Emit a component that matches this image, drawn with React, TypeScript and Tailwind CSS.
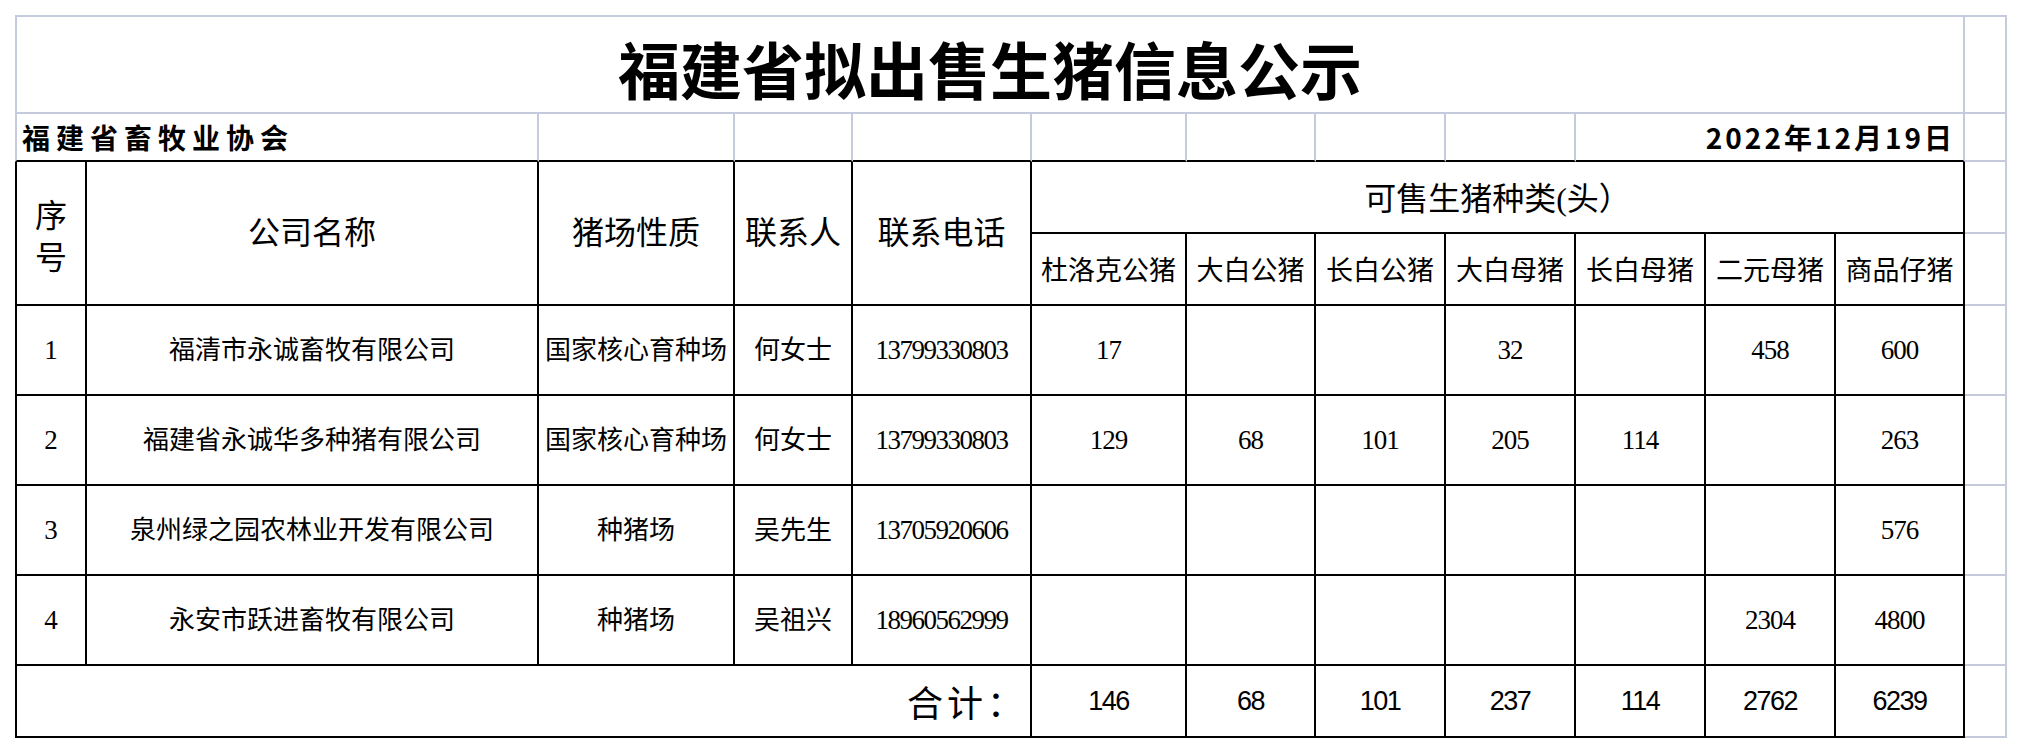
import React from "react";

const G = "border-[#c5cbdc]";
const serif = "font-['Liberation_Serif','Noto_Sans_CJK_SC',serif]";
const hei = "font-['Noto_Sans_CJK_SC',sans-serif]";
const arial = "font-['Liberation_Sans','Noto_Sans_CJK_SC',sans-serif]";

type Row = {
  no: string;
  name: string;
  kind: string;
  contact: string;
  phone: string;
  counts: string[];
};

const rows: Row[] = [
  { no: "1", name: "福清市永诚畜牧有限公司", kind: "国家核心育种场", contact: "何女士", phone: "13799330803", counts: ["17", "", "", "32", "", "458", "600"] },
  { no: "2", name: "福建省永诚华多种猪有限公司", kind: "国家核心育种场", contact: "何女士", phone: "13799330803", counts: ["129", "68", "101", "205", "114", "", "263"] },
  { no: "3", name: "泉州绿之园农林业开发有限公司", kind: "种猪场", contact: "吴先生", phone: "13705920606", counts: ["", "", "", "", "", "", "576"] },
  { no: "4", name: "永安市跃进畜牧有限公司", kind: "种猪场", contact: "吴祖兴", phone: "18960562999", counts: ["", "", "", "", "", "2304", "4800"] },
];

const kinds = ["杜洛克公猪", "大白公猪", "长白公猪", "大白母猪", "长白母猪", "二元母猪", "商品仔猪"];
const totals = ["146", "68", "101", "237", "114", "2762", "6239"];

const cell = "flex items-center justify-center border-r-2 border-b-2 border-black text-black";
const side = `border-r-2 border-b-2 ${G}`;

export default function App() {
  return (
    <div className="min-h-screen bg-white pt-[15px] pl-[15px]">
      <div className="grid grid-cols-[72px_452px_196px_118px_179px_155px_129px_130px_130px_130px_130px_129px_42px] grid-rows-[99px_48px_72px_72px_90px_90px_90px_90px_72px] w-max">
        {/* title row */}
        <div className={`col-span-12 flex items-center justify-center border-2 ${G} pt-2 text-[62px] font-bold text-black ${hei}`}>
          福建省拟出售生猪信息公示
        </div>
        <div className={`border-t-2 ${side}`} />

        {/* org / date row */}
        <div className={`col-span-2 flex items-center border-l-2 border-r-2 border-b-2 border-l-[#c5cbdc] border-r-[#c5cbdc] border-b-black pl-[5px] text-[28px] font-bold tracking-[6px] text-black ${hei}`}>
          福建省畜牧业协会
        </div>
        {[0, 1, 2, 3, 4, 5, 6].map((i) => (
          <div key={i} className="border-r-2 border-b-2 border-r-[#c5cbdc] border-b-black" />
        ))}
        <div className={`col-span-3 flex items-center justify-end border-r-2 border-b-2 border-r-[#c5cbdc] border-b-black pr-[8px] text-[28px] font-bold tracking-[3px] text-black ${hei}`}>
          2022年12月19日
        </div>
        <div className={side} />

        {/* header */}
        <div className={`${cell} row-span-2 border-l-2 flex-col text-[32px] leading-[42px] pt-2 ${serif}`}>
          <span>序</span>
          <span>号</span>
        </div>
        <div className={`${cell} row-span-2 text-[32px] ${serif}`}>公司名称</div>
        <div className={`${cell} row-span-2 text-[32px] ${serif}`}>猪场性质</div>
        <div className={`${cell} row-span-2 text-[32px] ${serif}`}>联系人</div>
        <div className={`${cell} row-span-2 text-[32px] ${serif}`}>联系电话</div>
        <div className={`${cell} col-span-7 text-[32px] pt-1 ${serif}`}>可售生猪种类(头）</div>
        <div className={side} />
        {kinds.map((k) => (
          <div key={k} className={`${cell} text-[27px] pt-1 ${serif}`}>
            {k}
          </div>
        ))}
        <div className={side} />

        {/* data */}
        {rows.map((r) => (
          <React.Fragment key={r.no}>
            <div className={`${cell} border-l-2 text-[27px] ${serif}`}>{r.no}</div>
            <div className={`${cell} text-[26px] ${serif}`}>{r.name}</div>
            <div className={`${cell} text-[26px] ${serif}`}>{r.kind}</div>
            <div className={`${cell} text-[26px] ${serif}`}>{r.contact}</div>
            <div className={`${cell} text-[27px] tracking-[-1.5px] ${serif}`}>{r.phone}</div>
            {r.counts.map((c, i) => (
              <div key={i} className={`${cell} text-[27px] tracking-[-1px] ${serif}`}>
                {c}
              </div>
            ))}
            <div className={side} />
          </React.Fragment>
        ))}

        {/* totals */}
        <div className={`${cell} col-span-5 border-l-2 justify-end pr-[3px] text-[36px] tracking-[4px] ${hei}`}>
          合计：
        </div>
        {totals.map((t, i) => (
          <div key={i} className={`${cell} text-[27px] tracking-[-1.5px] ${arial}`}>
            {t}
          </div>
        ))}
        <div className={side} />
      </div>
    </div>
  );
}
